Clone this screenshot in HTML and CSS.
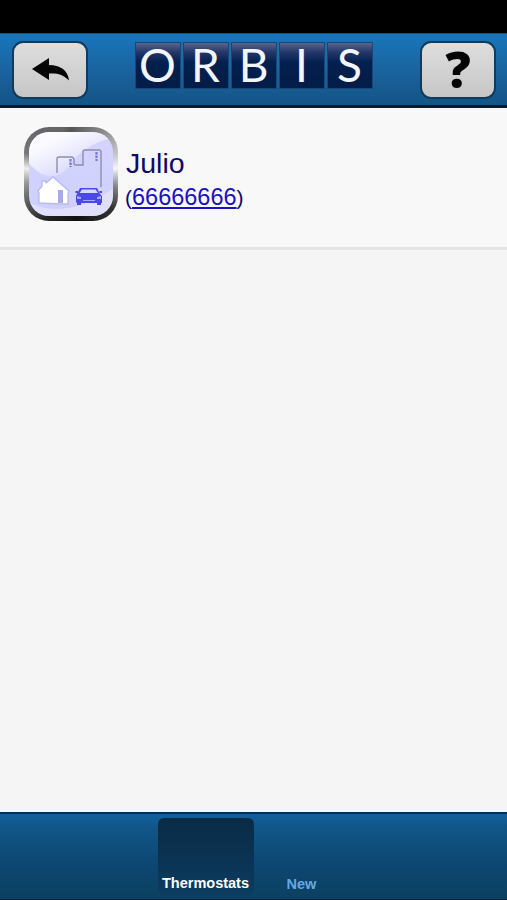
FILE: index.html
```html
<!DOCTYPE html>
<html lang="en">
<head>
    <meta charset="UTF-8">
    <meta name="viewport" content="width=device-width, initial-scale=1.0">
    <title>Orbis</title>
    <link rel="stylesheet" href="styles.css">
</head>
<body>
    <div class="app">
        <div class="status-bar"></div>

        <header class="header">
            <button class="header-button" aria-label="Back">
                <svg width="40" height="26" viewBox="0 0 40 26">
                    <path d="M2 13 L19 2 V9 C30 9 38 14 39 24.5 C33 18 27 17 19 17.5 V24 Z" fill="#050505"/>
                </svg>
            </button>
            <div class="logo">
                <span class="tile">O</span>
                <span class="tile">R</span>
                <span class="tile">B</span>
                <span class="tile">I</span>
                <span class="tile">S</span>
            </div>
            <button class="header-button help">?</button>
        </header>

        <main class="content">
            <div class="device">
                <div class="device-icon">
                    <svg width="84" height="84" viewBox="0 0 84 84">
                        <defs>
                            <linearGradient id="shine" x1="0" y1="0" x2="0.75" y2="0.8">
                                <stop offset="0" stop-color="#fff"/>
                                <stop offset="0.35" stop-color="#fff" stop-opacity="0.85"/>
                                <stop offset="1" stop-color="#fff" stop-opacity="0.1"/>
                            </linearGradient>
                        </defs>
                        <path d="M0 0 H84 V6 C64 10 50 20 41 33 C32 47 14 49 0 31 Z" fill="url(#shine)"/>
                        <path d="M0 70 C16 80 46 82 84 57 V84 H0 Z" fill="#fff" opacity="0.35"/>
                        <!-- buildings -->
                        <path d="M28 41 V27 Q28 25 30 25 H42 Q45 25 45 28 V31 Q45 33 47 33 H54 V20 Q54 18 56 18 H70 Q72 18 72 20 V55" fill="none" stroke="#8f8fa8" stroke-width="1.4"/>
                        <path d="M41.500 27 V35 M67.500 20 V29" stroke="#7474df" stroke-width="2.2" stroke-dasharray="2.5 1"/>
                        <!-- house -->
                        <path d="M10 71 V61 L9 59 L13 54 V49 H17 V51 L24 45 L32 52 L40 59 L39 62 V72 H32 Z" fill="#fff" stroke="#b9b9f3" stroke-width="1.3" stroke-linejoin="round"/>
                        <rect x="29" y="58" width="5" height="13" fill="#aaaae8"/>
                        <!-- car -->
                        <path d="M48 62 L51 56 H68 L71 62 L73 64 V71 H72 V73 H68 V71 H52 V73 H48 V71 L47 70 V64 Z" fill="#4949ea"/>
                        <path d="M50.500 61 L53 57.500 H66.500 L69 61 Z" fill="#d8d8ff"/>
                        <path d="M48 64 L52 65 V67 H48 Z M72 64 L68 65 V67 H72 Z M54 68 H66 V69 H54 Z" fill="#a7a7ff"/>
                        <path d="M46.500 60 H49 M70.500 60 H73" stroke="#4949ea" stroke-width="2"/>
                    </svg>
                </div>
                <div class="device-info">
                    <div class="device-name">Julio</div>
                    <div class="device-phone">(<a href="tel:66666666">66666666</a>)</div>
                </div>
            </div>
        </main>

        <nav class="tab-bar">
            <div class="tab active">Thermostats</div>
            <div class="tab">New</div>
        </nav>
    </div>
</body>
</html>
```

FILE: styles.css
```css
* {
    box-sizing: border-box;
}
body {
    margin: 0;
    background-color: #f5f5f5;
    font-family: "Liberation Sans", Arial, sans-serif;
}
.app {
    display: flex;
    flex-direction: column;
    height: 900px;
    overflow: hidden;
}
.status-bar {
    flex: none;
    height: 33px;
    background-color: #000;
}
.header {
    flex: none;
    display: flex;
    justify-content: space-between;
    align-items: flex-start;
    height: 75px;
    padding: 7px 11px 0 12px;
    border-top: 1px solid #14517c;
    border-bottom: 3px solid #031a2e;
    background: linear-gradient(#1976bb, #19609a 60%, #145486);
}
.header-button {
    display: flex;
    justify-content: center;
    align-items: center;
    width: 76px;
    height: 58px;
    padding: 0 0 2px;
    border: 2px solid #123b5b;
    border-radius: 11px;
    background: linear-gradient(#dedede, #c6c6c6);
    color: #050505;
}
.help {
    font: 800 50px/54px "Open Sans", sans-serif;
}
.logo {
    display: flex;
    gap: 2px;
    margin: 1px 0 0 -1px;
}
.tile {
    width: 46px;
    height: 47px;
    border: 1px solid #174777;
    background: linear-gradient(#59658c, #24386a 20%, #04204e 42%, #031c48);
    color: #f2f5fc;
    font: 400 46px/43px Lato, sans-serif;
    text-align: center;
}
.content {
    flex: 1;
    background-color: #f5f5f5;
}
.device {
    display: flex;
    height: 142px;
    padding: 19px 0 0 24px;
    border-bottom: 3px solid #e4e4e4;
    background-color: #f8f8f8;
}
.device-icon {
    width: 94px;
    height: 94px;
    padding: 5px;
    border-radius: 25px;
    background: conic-gradient(#555 0, #888 10%, #ccc 19%, #f5f5f5 23%, #8a8a8a 29%, #333 36%, #111 48%, #222 58%, #555 65%, #999 72%, #eee 77%, #777 82%, #666 90%, #666 97%, #555);
}
.device-icon svg {
    display: block;
    border-radius: 20px;
    background: linear-gradient(#d4d4ff, #cfcffc);
}
.device-info {
    padding: 20px 0 0 8px;
    color: #11086b;
}
.device-name {
    font-size: 28.5px;
    line-height: 32px;
}
.device-phone {
    font-size: 21px;
    line-height: 32px;
    margin: 2px 0 0 -1px;
}
.device-phone a {
    color: #1a12c4;
    font-size: 23.5px;
    text-decoration-thickness: 2px;
    text-underline-offset: 2px;
}
.tab-bar {
    flex: none;
    display: flex;
    justify-content: center;
    height: 88px;
    padding-top: 4px;
    border-top: 2px solid #092f50;
    border-bottom: 1px solid #041c31;
    background: linear-gradient(#125f9e, #115688 15%, #0d4672 60%, #0b4060);
}
.tab {
    width: 96px;
    height: 78px;
    padding-top: 57px;
    color: #65a9e4;
    font-size: 14.5px;
    font-weight: bold;
    line-height: 18px;
    text-align: center;
}
.tab.active {
    padding-top: 56px;
    border-radius: 6px;
    background: linear-gradient(#092b46, #0b3556 65%, #0c3e63);
    color: #fff;
}
```
